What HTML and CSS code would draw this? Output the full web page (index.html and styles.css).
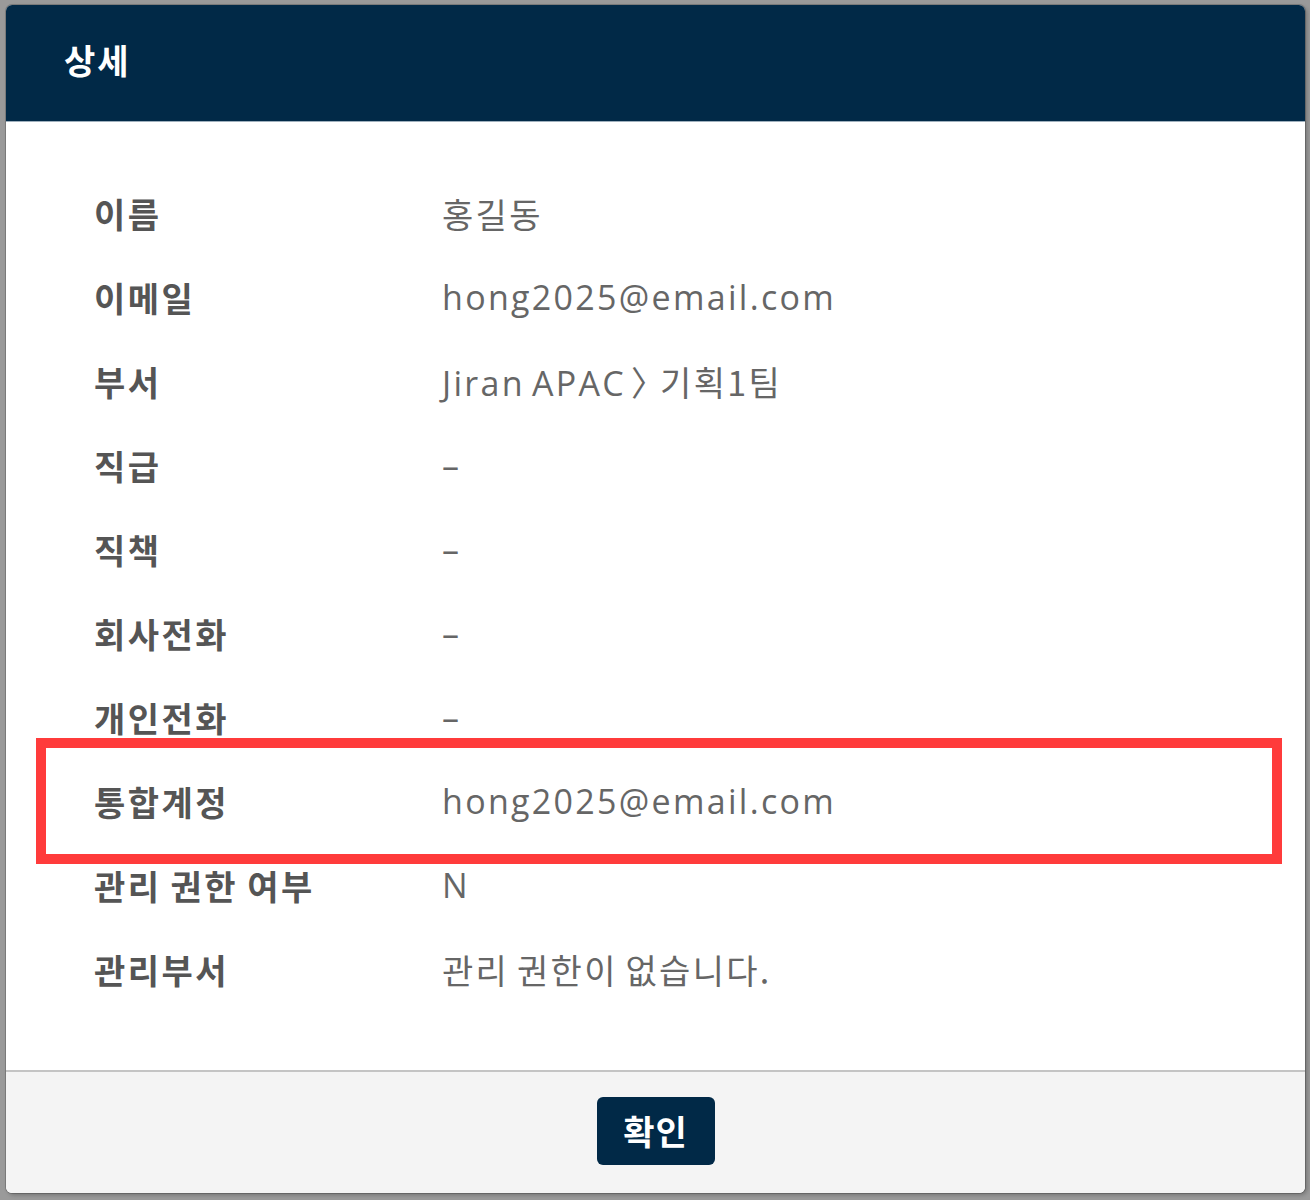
FILE: index.html
```html
<!DOCTYPE html>
<html lang="ko">
<head>
<meta charset="utf-8">
<title>상세</title>
<link rel="stylesheet" href="styles.css">
</head>
<body>
<div class="backdrop">
  <section class="modal">
    <header class="modal-header">
      <h1 class="modal-title">상세</h1>
    </header>
    <div class="modal-body">
      <dl class="detail-list">
        <div class="row"><dt>이름</dt><dd>홍길동</dd></div>
        <div class="row"><dt>이메일</dt><dd class="latin">hong2025@email.com</dd></div>
        <div class="row"><dt>부서</dt><dd><span class="latin">Jiran APAC</span><span class="sep">〉</span>기획1팀</dd></div>
        <div class="row"><dt>직급</dt><dd class="latin">–</dd></div>
        <div class="row"><dt>직책</dt><dd class="latin">–</dd></div>
        <div class="row"><dt>회사전화</dt><dd class="latin">–</dd></div>
        <div class="row"><dt>개인전화</dt><dd class="latin">–</dd></div>
        <div class="row highlighted"><dt>통합계정</dt><dd class="latin">hong2025@email.com</dd></div>
        <div class="row"><dt>관리 권한 여부</dt><dd class="latin">N</dd></div>
        <div class="row"><dt>관리부서</dt><dd>관리 권한이 없습니다.</dd></div>
      </dl>
    </div>
    <footer class="modal-footer">
      <button class="btn-confirm" type="button">확인</button>
    </footer>
  </section>
</div>
</body>
</html>
```
FILE: styles.css
```css
html, body {
  margin: 0;
  padding: 0;
  background: #9a9a9a;
}

body {
  font-family: "Noto Sans CJK KR", "Noto Sans", sans-serif;
  width: 1310px;
  height: 1200px;
  overflow: hidden;
}

.backdrop {
  padding: 5px 5px 0 6px;
}

.modal {
  width: 1299px;
  height: 1188px;
  background: #ffffff;
  border-radius: 6px;
  overflow: hidden;
  display: flex;
  flex-direction: column;
  box-shadow: 0 0 0 1px rgba(0, 0, 0, 0.18), 2px 2px 4px rgba(0, 0, 0, 0.25);
}

.modal-header {
  height: 117px;
  flex: none;
  background: #012947;
  display: flex;
  align-items: center;
  padding-left: 58px;
  border-bottom: 1px solid #9fb0bd;
  box-sizing: border-box;
}

.modal-title {
  margin: 0;
  color: #ffffff;
  font-size: 34px;
  letter-spacing: 2px;
  font-weight: 700;
  line-height: 1;
  margin-top: -6px;
}

.modal-body {
  flex: 1;
}

.detail-list {
  margin: 0;
  padding: 49px 44px 0 51px;
}

.row {
  display: grid;
  grid-template-columns: 348px 1fr;
  padding-left: 37px;
  height: 84px;
  align-items: center;
}

.row.highlighted {
  outline: 10px solid #ff3b3b;
  outline-offset: 11px;
}

.row dt {
  margin: 0;
  font-size: 34px;
  letter-spacing: 2.5px;
  word-spacing: -3px;
  font-weight: 700;
  color: #555555;
}

.row dd {
  margin: 0;
  font-size: 34px;
  letter-spacing: 2.3px;
  word-spacing: -4px;
  font-weight: 400;
  color: #666666;
}

.latin {
  font-family: "Open Sans", "Noto Sans CJK KR", sans-serif;
}

.sep {
  letter-spacing: -5px;
  margin-left: 5px;
}

.modal-footer {
  height: 121px;
  flex: none;
  background: #f4f4f4;
  border-top: 2px solid #c4c4c4;
  display: flex;
  align-items: center;
  justify-content: center;
}

.btn-confirm {
  width: 118px;
  height: 68px;
  border: none;
  border-radius: 6px;
  background: #012947;
  color: #ffffff;
  font-family: "Noto Sans CJK KR", sans-serif;
  font-size: 34px;
  letter-spacing: 1px;
  font-weight: 700;
  padding: 0;
  margin-top: -4px;
}
```
